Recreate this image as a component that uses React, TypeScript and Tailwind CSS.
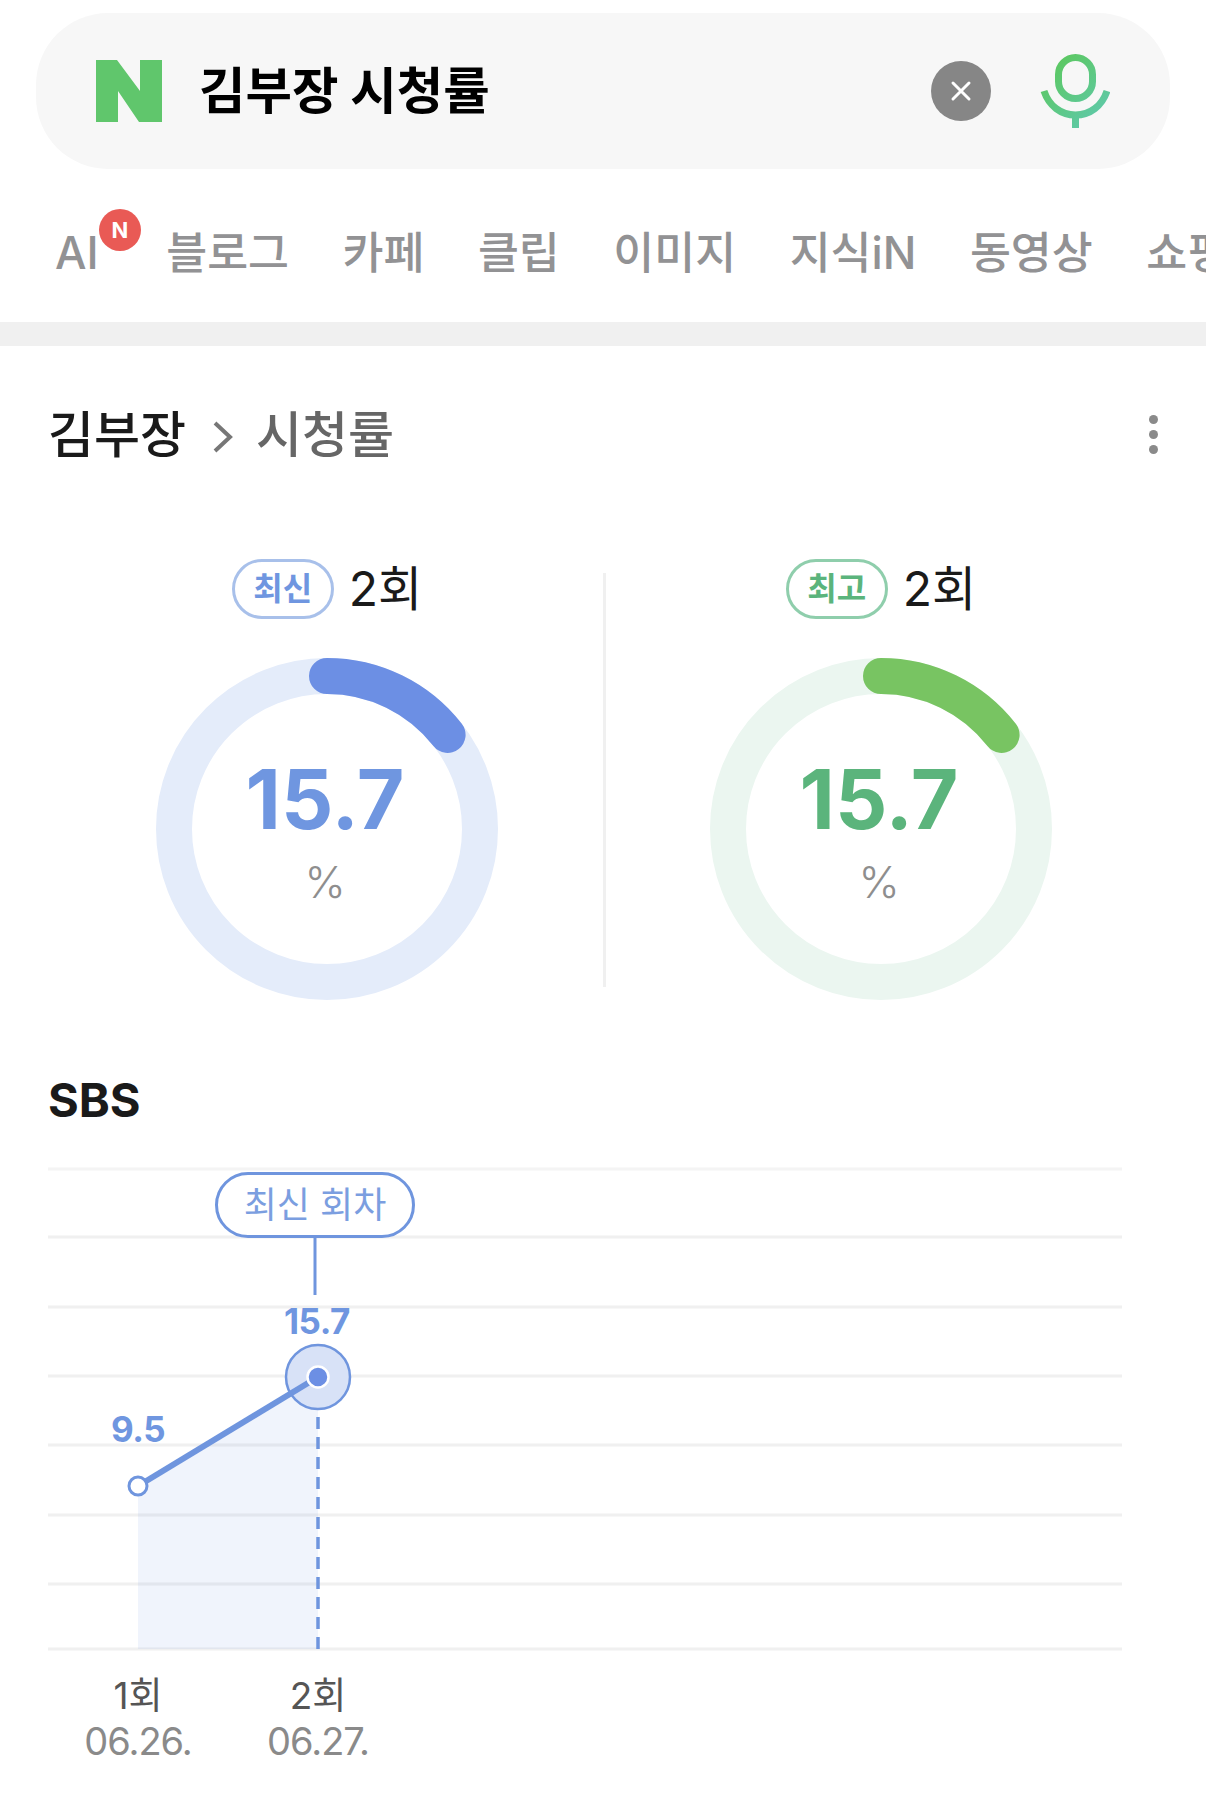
const tabs = ["블로그", "카페", "클립", "이미지", "지식iN", "동영상", "쇼핑"];
const gridLines = [1169, 1237, 1307, 1376, 1445, 1515, 1584, 1649];

const SearchBar = () => (
  <div className="mx-[36px] mt-[13px] flex h-[156px] w-[1134px] items-center rounded-[72px] bg-[#f7f7f7] pl-[60px] pr-[60px]">
    <svg width="66" height="62" viewBox="0 0 66 62" className="shrink-0">
      <path d="M0 0H21L44 31V0H66V62H43L22 31V62H0Z" fill="#60c66c" />
    </svg>
    <span className="ml-[37px] text-[50.5px] font-bold leading-none text-black">김부장 시청률</span>
    <div className="ml-auto flex h-[60px] w-[60px] items-center justify-center rounded-full bg-[#868686]">
      <svg width="24" height="24" viewBox="0 0 24 24" fill="none" stroke="#fff" strokeWidth="3" strokeLinecap="round">
        <path d="M4 4L20 20M20 4L4 20" />
      </svg>
    </div>
    <svg width="70" height="76" viewBox="0 0 70 76" fill="none" className="ml-[49px] shrink-0">
      <defs>
        <linearGradient id="mic" gradientUnits="userSpaceOnUse" x1="10" y1="10" x2="66" y2="70">
          <stop offset="0" stopColor="#5cc85f" />
          <stop offset="1" stopColor="#5fc9b0" />
        </linearGradient>
      </defs>
      <rect x="18.5" y="4.5" width="34" height="41" rx="17" stroke="url(#mic)" strokeWidth="7" />
      <path d="M4 38C9 53 21 62 35.5 62C50 62 62 53 67 38" stroke="url(#mic)" strokeWidth="7" />
      <path d="M35.5 62V75" stroke="url(#mic)" strokeWidth="7" />
    </svg>
  </div>
);

const Tabs = () => (
  <div className="flex h-[153px] items-center gap-[53.5px] overflow-hidden whitespace-nowrap pl-[55px] pt-[16px] text-[44.5px] font-medium leading-none text-[#929294]">
    <span className="relative mr-[14px]">
      AI
      <span className="absolute left-[44px] top-[-22px] flex h-[42px] w-[42px] items-center justify-center rounded-full bg-[#e95a55] text-[22px] font-bold text-white">
        N
      </span>
    </span>
    {tabs.map((tab) => (
      <span key={tab}>{tab}</span>
    ))}
  </div>
);

const Gauge = ({
  label,
  track,
  bar,
  text,
  border,
}: {
  label: string;
  track: string;
  bar: string;
  text: string;
  border: string;
}) => (
  <div className="mt-[39px] flex w-[342px] flex-col items-center">
    <div className="flex h-[60px] items-center gap-[15px]">
      <span
        className="flex h-[60px] w-[102px] items-center justify-center rounded-full border-[3px] text-[32px] font-bold leading-none"
        style={{ borderColor: border, color: text }}
      >
        {label}
      </span>
      <span className="text-[48px] font-normal leading-none text-[#1a1a1a]">2회</span>
    </div>
    <div className="relative mt-[39px] h-[342px] w-[342px]">
      <svg width="342" height="342" viewBox="0 0 342 342" fill="none">
        <circle cx="171" cy="171" r="153" stroke={track} strokeWidth="36" />
        <path d="M171 18A153 153 0 0 1 291.6 76.9" stroke={bar} strokeWidth="36" strokeLinecap="round" />
      </svg>
      <div className="absolute inset-0 flex flex-col items-center pr-[4px]">
        <span className="mt-[92px] text-[82px] font-bold leading-[100px]" style={{ color: text }}>
          15.7
        </span>
        <span className="mt-[8px] text-[44px] font-light leading-[48px] text-[#8e8e8e]">%</span>
      </div>
    </div>
  </div>
);

const Chart = () => (
  <div className="relative mt-[22px] h-[520px] w-[1206px]">
    <svg width="1206" height="520" viewBox="0 1150 1206 520" fill="none" className="absolute left-0 top-0">
      {gridLines.map((y, i) => (
        <path key={y} d={`M48 ${y}H1122`} stroke={i === 0 ? "#f4f4f4" : "#f0f0f0"} strokeWidth="3" />
      ))}
      <path d="M138 1486L318 1377V1649H138Z" fill="#6f8fe4" fillOpacity="0.1" />
      <path d="M318 1377V1649" stroke="#6f95de" strokeWidth="3.5" strokeDasharray="12 8" />
      <circle cx="318" cy="1377" r="32" fill="#d8e2f7" stroke="#6f95de" strokeWidth="2.5" />
      <path d="M138 1486L318 1377" stroke="#6f95de" strokeWidth="6" />
      <circle cx="318" cy="1377" r="10.5" fill="#6c8fe4" stroke="#fff" strokeWidth="2.5" />
      <circle cx="138" cy="1486" r="9" fill="#fff" stroke="#6f95de" strokeWidth="3" />
      <path d="M315 1238V1295" stroke="#6f95de" strokeWidth="3" />
    </svg>
    <span className="absolute left-[215px] top-[22px] flex h-[66px] w-[200px] items-center justify-center rounded-full border-[3px] border-[#6f95de] bg-white text-[36px] leading-none text-[#7b9ee0]">
      최신 회차
    </span>
    <span className="absolute left-[284px] top-[150px] text-[35px] font-bold leading-[42px] tracking-[-0.5px] text-[#6f96e0]">
      15.7
    </span>
    <span className="absolute left-[111px] top-[258px] text-[35px] font-bold leading-[42px] tracking-[-0.5px] text-[#6f96e0]">
      9.5
    </span>
  </div>
);

export default function App() {
  return (
    <div
      className="h-[1814px] w-[1206px] overflow-hidden bg-white"
      style={{ fontFamily: 'Inter, "Noto Sans CJK KR", sans-serif' }}
    >
      <SearchBar />
      <Tabs />
      <div className="h-[24px] bg-[#f0f0f0]" />

      <div className="flex h-[174px] items-center pl-[48px] pr-[48px] pt-[3px] text-[50px] font-medium leading-none">
        <span className="text-[#1a1a1a]">김부장</span>
        <svg width="24" height="36" viewBox="0 0 24 36" fill="none" className="ml-[25px] mr-[21px] mt-[4px]">
          <path d="M4 4L19 18L4 32" stroke="#777" strokeWidth="4" />
        </svg>
        <span className="text-[#666666]">시청률</span>
        <div className="ml-auto flex flex-col gap-[6px]">
          <span className="h-[9px] w-[9px] rounded-full bg-[#8a8a8a]" />
          <span className="h-[9px] w-[9px] rounded-full bg-[#8a8a8a]" />
          <span className="h-[9px] w-[9px] rounded-full bg-[#8a8a8a]" />
        </div>
      </div>

      <div className="flex h-[480px] items-start pl-[156px]">
        <Gauge label="최신" track="#e4ecfa" bar="#6c8fe4" text="#6f96e0" border="#a8c0ea" />
        <div className="ml-[105px] mr-[104px] mt-[53px] h-[414px] w-[3px] bg-[#f0f0f0]" />
        <Gauge label="최고" track="#ebf6f0" bar="#78c462" text="#5bb47c" border="#8fceac" />
      </div>

      <div className="mt-[72px] pl-[48px] text-[47px] font-bold leading-[56px] text-[#1a1a1a]">SBS</div>
      <Chart />

      <div className="mt-[3px] flex pl-[78px]">
        <div className="flex w-[120px] flex-col items-center">
          <span className="text-[37px] leading-[46px] text-[#555555]">1회</span>
          <span className="text-[38px] leading-[44px] tracking-[-1px] text-[#8a8a8a]">06.26.</span>
        </div>
        <div className="ml-[60px] flex w-[120px] flex-col items-center">
          <span className="text-[37px] leading-[46px] text-[#555555]">2회</span>
          <span className="text-[38px] leading-[44px] tracking-[-1px] text-[#8a8a8a]">06.27.</span>
        </div>
      </div>
    </div>
  );
}
